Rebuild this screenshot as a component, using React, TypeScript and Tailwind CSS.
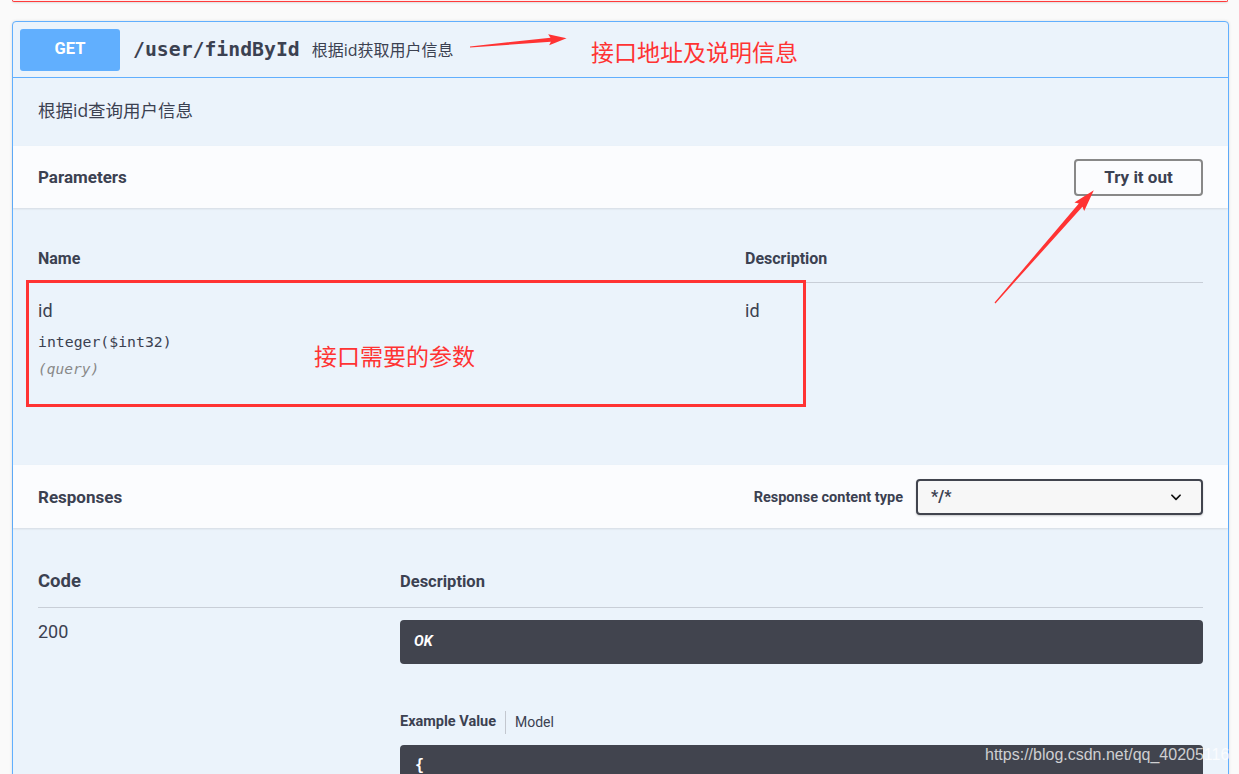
import React from "react";

const sans = { fontFamily: '"Roboto", "Noto Sans CJK SC", sans-serif' };
const cjk = { fontFamily: '"Open Sans", "Noto Sans CJK SC", sans-serif' };
const mono = { fontFamily: '"DejaVu Sans Mono", "Liberation Mono", monospace' };

function Arrow({ x, y, len, angle, head = 20, hw = 6, sw = 2.2 }: { x: number; y: number; len: number; angle: number; head?: number; hw?: number; sw?: number }) {
  const L = len;
  const pts = `0,-0.6 ${L - head + 2},-${sw} ${L - head},-${hw} ${L},0 ${L - head},${hw} ${L - head + 2},${sw} 0,0.6`;
  return (
    <g transform={`translate(${x},${y}) rotate(${angle})`}>
      <polygon points={pts} fill="#ff3333" />
    </g>
  );
}

export default function App() {
  return (
    <div className="relative w-full h-[774px] overflow-hidden bg-[#fafafa] text-[#3b4151]" style={sans}>
      {/* previous block bottom edge */}
      <div className="ml-[12px] mr-[11px] h-[2px] border-x border-b border-[#ff3b3b] rounded-b-[4px] bg-[#fdf0f0] shadow-[0_1px_2px_rgba(0,0,0,0.12)]" />

      {/* operation block */}
      <div className="mt-[19px] ml-[12px] mr-[10px] border border-[#61affe] rounded-[4px] bg-[#ebf3fb] shadow-[0_0_3px_rgba(0,0,0,0.12)]">
        {/* summary */}
        <div className="h-[56px] flex items-center pl-[7px] border-b border-[#61affe]">
          <div className="w-[100px] h-[42px] rounded-[3px] bg-[#61affe] flex items-center justify-center text-white font-bold text-[16.5px]" style={sans}>
            GET
          </div>
          <span className="ml-[13px] text-[19.8px] font-bold text-[#3b4151]" style={mono}>
            /user/findById
          </span>
          <span className="ml-[12px] text-[16px] text-[#3b4151]" style={cjk}>
            根据id获取用户信息
          </span>
        </div>

        {/* description */}
        <div className="h-[68px] flex items-center px-[25px] pb-[3px] text-[17.5px]" style={cjk}>
          根据id查询用户信息
        </div>

        {/* parameters header */}
        <div className="h-[62px] flex items-center justify-between px-[25px] bg-[#fbfcfe] shadow-[0_1px_2px_rgba(0,0,0,0.1)]">
          <span className="text-[17px] font-bold pt-[2px]">Parameters</span>
          <button className="w-[129px] h-[37px] rounded-[4px] border-2 border-[#888888] bg-transparent text-[17px] font-bold text-[#3b4151] pt-[1px]">
            Try it out
          </button>
        </div>

        {/* parameters table */}
        <div className="h-[257px] px-[25px]">
          <div className="flex pt-[41px] pb-[13px] border-b border-[#c8ced7] text-[16px] font-bold leading-[20px]">
            <div className="w-[707px]">Name</div>
            <div>Description</div>
          </div>
          <div className="flex pt-[16px]">
            <div className="w-[707px] flex flex-col">
              <span className="text-[18px] leading-[24px]">id</span>
              <span className="mt-[9px] text-[14.8px] leading-[20px]" style={mono}>integer($int32)</span>
              <span className="mt-[7px] text-[14.5px] leading-[20px] italic text-[#888888]" style={mono}>(query)</span>
            </div>
            <div className="text-[18px] leading-[24px]">id</div>
          </div>
        </div>

        {/* responses header */}
        <div className="h-[63px] flex items-center justify-between px-[25px] bg-[#fbfcfe] shadow-[0_1px_2px_rgba(0,0,0,0.1)]">
          <span className="text-[17px] font-bold pt-[2px]">Responses</span>
          <div className="flex items-center">
            <span className="text-[14.5px] font-bold pt-[2px]">Response content type</span>
            <div className="ml-[13px] w-[287px] h-[36px] rounded-[4px] border-2 border-[#41444e] bg-[#f7f7f7] flex items-center justify-between pl-[13px] pr-[18px] shadow-[0_1px_2px_rgba(0,0,0,0.2)]">
              <span className="text-[16px] font-bold">*/*</span>
              <svg width="14" height="14" viewBox="0 0 24 24" fill="none" stroke="#111" strokeWidth="3" strokeLinecap="round" strokeLinejoin="round">
                <path d="M5 9l7 7 7-7" />
              </svg>
            </div>
          </div>
        </div>

        {/* responses table */}
        <div className="px-[25px] pb-[40px]">
          <div className="flex items-end pt-[41px] pb-[14px] border-b border-[#c8ced7] font-bold">
            <div className="w-[362px] text-[18.5px] leading-[24px]">Code</div>
            <div className="text-[16.5px] leading-[22px]">Description</div>
          </div>
          <div className="flex pt-[12px]">
            <div className="w-[362px] text-[18px] leading-[24px]">200</div>
            <div className="flex-1 flex flex-col">
              <div className="h-[44px] rounded-[4px] bg-[#41444e] flex items-center px-[14px]">
                <span className="text-white italic font-bold text-[14.5px]">OK</span>
              </div>
              <div className="mt-[47px] flex items-center h-[22px]">
                <span className="text-[14.5px] font-bold leading-[20px]">Example Value</span>
                <span className="mx-[9px] w-px h-[23px] bg-[#c3c7cf]" />
                <span className="text-[14px] leading-[20px]">Model</span>
              </div>
              <div className="mt-[12px] h-[120px] rounded-[4px] bg-[#41444e] px-[15px] pt-[8px]">
                <span className="text-white font-bold text-[15px]" style={mono}>{"{"}</span>
              </div>
            </div>
          </div>
        </div>
      </div>

      {/* annotations */}
      <svg className="absolute left-0 top-0 pointer-events-none" width="1239" height="774">
        <Arrow x={470} y={47} len={97} angle={-5.2} head={18} hw={5.5} sw={2} />
        <Arrow x={995} y={303} len={150} angle={-48.8} head={22} hw={6.5} sw={2.4} />
      </svg>
      <div className="absolute left-[591px] top-[38px] text-[23px] leading-[28px] text-[#ff3333]" style={cjk}>
        接口地址及说明信息
      </div>
      <div className="absolute left-[314px] top-[342px] text-[23px] leading-[28px] text-[#ff3333]" style={cjk}>
        接口需要的参数
      </div>
      <div className="absolute left-[26px] top-[280px] w-[780px] h-[127px] border-[3px] border-[#ff3333] pointer-events-none" />
      <div
        className="absolute left-[985px] top-[745px] text-[16px] leading-[20px] text-white/75 whitespace-nowrap"
        style={{ fontFamily: '"Liberation Sans", Arial, sans-serif' }}
      >
        https://blog.csdn.net/qq_40205116
      </div>
    </div>
  );
}
